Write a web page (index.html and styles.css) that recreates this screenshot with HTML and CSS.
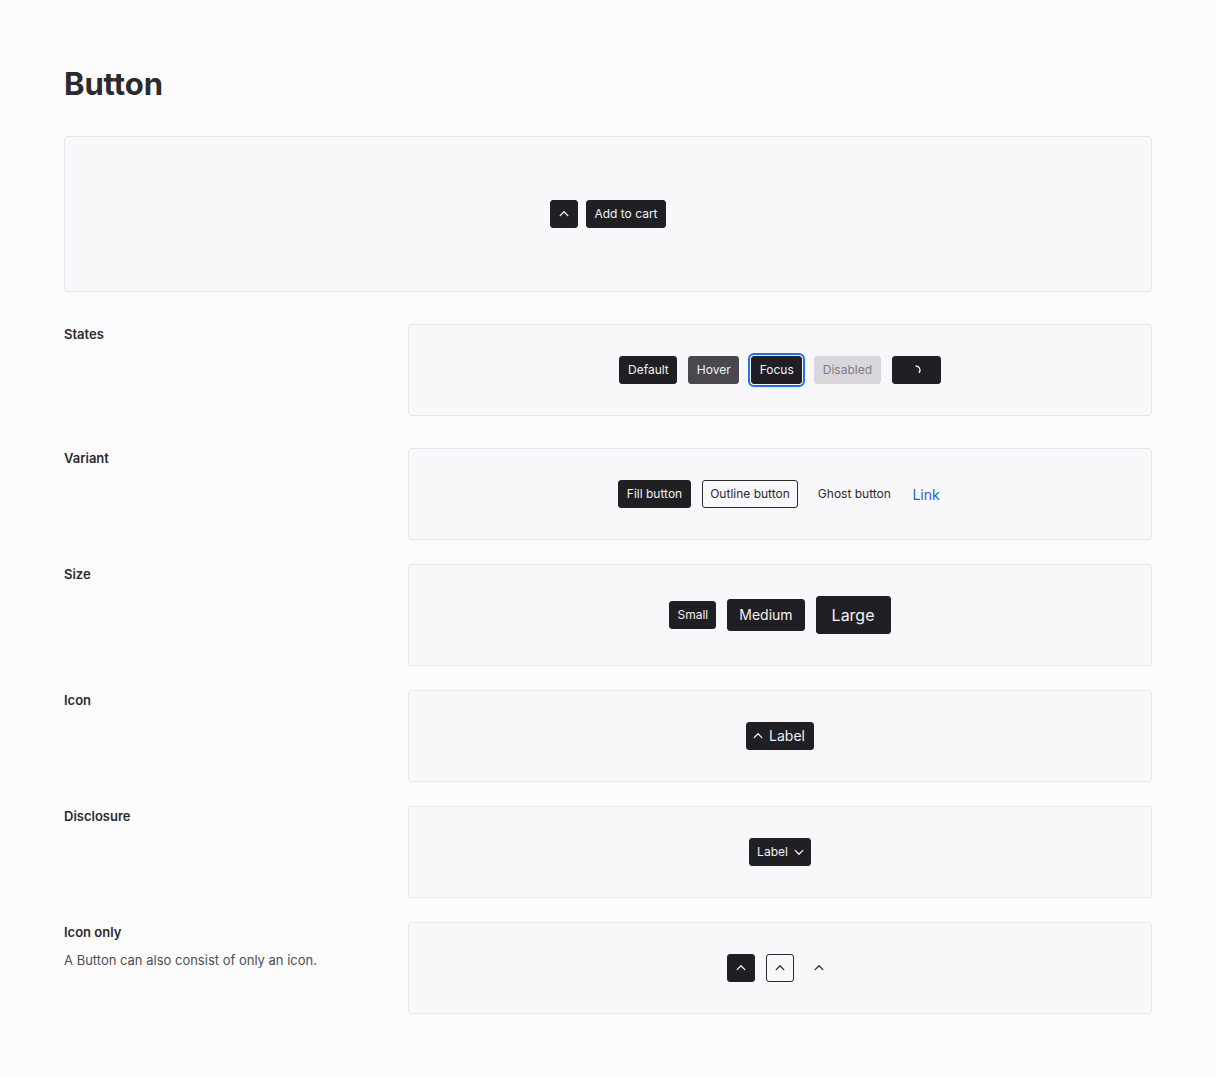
FILE: index.html
```html
<!DOCTYPE html>
<html lang="en">
<head>
<meta charset="utf-8">
<title>Button</title>
<link rel="stylesheet" href="styles.css">
</head>
<body>
<main class="page">
  <h1 class="title">Button</h1>

  <section class="preview">
    <button class="btn btn-fill btn-icon" aria-label="Up">
      <svg class="ico" viewBox="0 0 12 12"><path d="M2.2 7.6 L6 3.8 L9.8 7.6"/></svg>
    </button>
    <button class="btn btn-fill">Add to cart</button>
  </section>

  <div class="row row-first">
    <div class="label"><h3>States</h3></div>
    <div class="panel">
      <button class="btn btn-fill">Default</button>
      <button class="btn btn-fill is-hover">Hover</button>
      <button class="btn btn-fill is-focus">Focus</button>
      <button class="btn is-disabled">Disabled</button>
      <button class="btn btn-fill is-loading" aria-label="Loading">
        <svg class="spin" viewBox="0 0 12 12"><path d="M6 2 A4 4 0 0 1 9.2 8.4"/></svg>
      </button>
    </div>
  </div>

  <div class="row row-first">
    <div class="label"><h3>Variant</h3></div>
    <div class="panel">
      <button class="btn btn-fill">Fill button</button>
      <button class="btn btn-outline">Outline button</button>
      <button class="btn btn-ghost">Ghost button</button>
      <a class="link" href="#">Link</a>
    </div>
  </div>

  <div class="row">
    <div class="label"><h3>Size</h3></div>
    <div class="panel">
      <button class="btn btn-fill btn-sm">Small</button>
      <button class="btn btn-fill btn-md">Medium</button>
      <button class="btn btn-fill btn-lg">Large</button>
    </div>
  </div>

  <div class="row">
    <div class="label"><h3>Icon</h3></div>
    <div class="panel">
      <button class="btn btn-fill btn-with-icon">
        <svg class="ico" viewBox="0 0 12 12"><path d="M2.2 7.6 L6 3.8 L9.8 7.6"/></svg>
        <span>Label</span>
      </button>
    </div>
  </div>

  <div class="row">
    <div class="label"><h3>Disclosure</h3></div>
    <div class="panel">
      <button class="btn btn-fill btn-disclosure">
        <span>Label</span>
        <svg class="ico" viewBox="0 0 12 12"><path d="M2.2 4.4 L6 8.2 L9.8 4.4"/></svg>
      </button>
    </div>
  </div>

  <div class="row">
    <div class="label">
      <h3>Icon only</h3>
      <p>A Button can also consist of only an icon.</p>
    </div>
    <div class="panel">
      <button class="btn btn-fill btn-icon" aria-label="Up">
        <svg class="ico" viewBox="0 0 12 12"><path d="M2.2 7.6 L6 3.8 L9.8 7.6"/></svg>
      </button>
      <button class="btn btn-outline btn-icon" aria-label="Up">
        <svg class="ico" viewBox="0 0 12 12"><path d="M2.2 7.6 L6 3.8 L9.8 7.6"/></svg>
      </button>
      <button class="btn btn-ghost btn-icon" aria-label="Up">
        <svg class="ico" viewBox="0 0 12 12"><path d="M2.2 7.6 L6 3.8 L9.8 7.6"/></svg>
      </button>
    </div>
  </div>
</main>
</body>
</html>
```

FILE: styles.css
```css
* { box-sizing: border-box; }

html, body {
  margin: 0;
  padding: 0;
  background: #fdfcfd;
}

body {
  font-family: Inter, "Noto Sans", "Liberation Sans", sans-serif;
  color: #2b2a2e;
}

.page {
  padding: 66px 64px 40px 64px;
}

.title {
  margin: 0 0 34px 0;
  font-size: 31px;
  line-height: 36px;
  font-weight: 700;
  color: #2b2a2e;
  letter-spacing: -0.1px;
}

.preview {
  height: 156px;
  border: 1px solid #e8e6ea;
  border-radius: 3px;
  background: #f8f7f9;
  display: flex;
  align-items: center;
  justify-content: center;
  gap: 8px;
}

.row {
  display: grid;
  grid-template-columns: 344px 744px;
  margin-top: 24px;
}

.row-first {
  margin-top: 32px;
}

.label h3 {
  margin: 0;
  font-size: 13px;
  line-height: 20px;
  font-weight: 600;
  color: #2b2a2e;
}

.label p {
  margin: 8px 0 0 0;
  font-size: 13px;
  line-height: 20px;
  color: #4e4c52;
}

.panel {
  min-height: 92px;
  border: 1px solid #e8e6ea;
  border-radius: 3px;
  background: #f8f7f9;
  padding: 31px 16px;
  display: flex;
  align-items: center;
  justify-content: center;
  gap: 11px;
}

.btn {
  font-family: inherit;
  height: 28px;
  padding: 0 7.5px;
  border-radius: 3px;
  border: 1px solid transparent;
  font-size: 12px;
  line-height: 1;
  display: inline-flex;
  align-items: center;
  justify-content: center;
  cursor: pointer;
  background: transparent;
  color: #2b2a2e;
}

.btn-fill {
  background: #201f23;
  border-color: #201f23;
  color: #f3f2f4;
}

.btn-outline {
  background: transparent;
  border-color: #2b2a2e;
  color: #2b2a2e;
}

.btn-ghost {
  background: transparent;
  color: #2b2a2e;
}

.is-hover {
  background: #4a484e;
  border-color: #4a484e;
}

.is-focus {
  outline: 2px solid #1b6ff0;
  outline-offset: 1px;
  margin: 0 1px;
}

.is-disabled {
  background: #d9d7db;
  border-color: #d9d7db;
  color: #7f7c83;
}

.is-loading {
  width: 49px;
}

.spin {
  width: 12px;
  height: 12px;
  fill: none;
  stroke: #f3f2f4;
  stroke-width: 1.3;
  stroke-linecap: round;
}

.ico {
  width: 12px;
  height: 12px;
  flex: none;
  fill: none;
  stroke: currentColor;
  stroke-width: 1.3;
  stroke-linecap: round;
  stroke-linejoin: round;
}

.btn-icon {
  width: 28px;
  padding: 0;
}

.btn-sm {
  height: 28px;
  font-size: 12px;
  padding: 0 7px;
}

.btn-md {
  height: 32px;
  font-size: 14px;
  padding: 0 11px;
}

.btn-lg {
  height: 38px;
  font-size: 16px;
  padding: 0 15px;
}

.btn-with-icon {
  font-size: 14px;
  gap: 5px;
  padding: 0 8px 0 5px;
}

.btn-disclosure {
  gap: 5px;
  padding: 0 5px 0 7px;
}

.link {
  font-size: 14px;
  color: #1d64d6;
  text-decoration: none;
  padding: 0 2px;
}
```
